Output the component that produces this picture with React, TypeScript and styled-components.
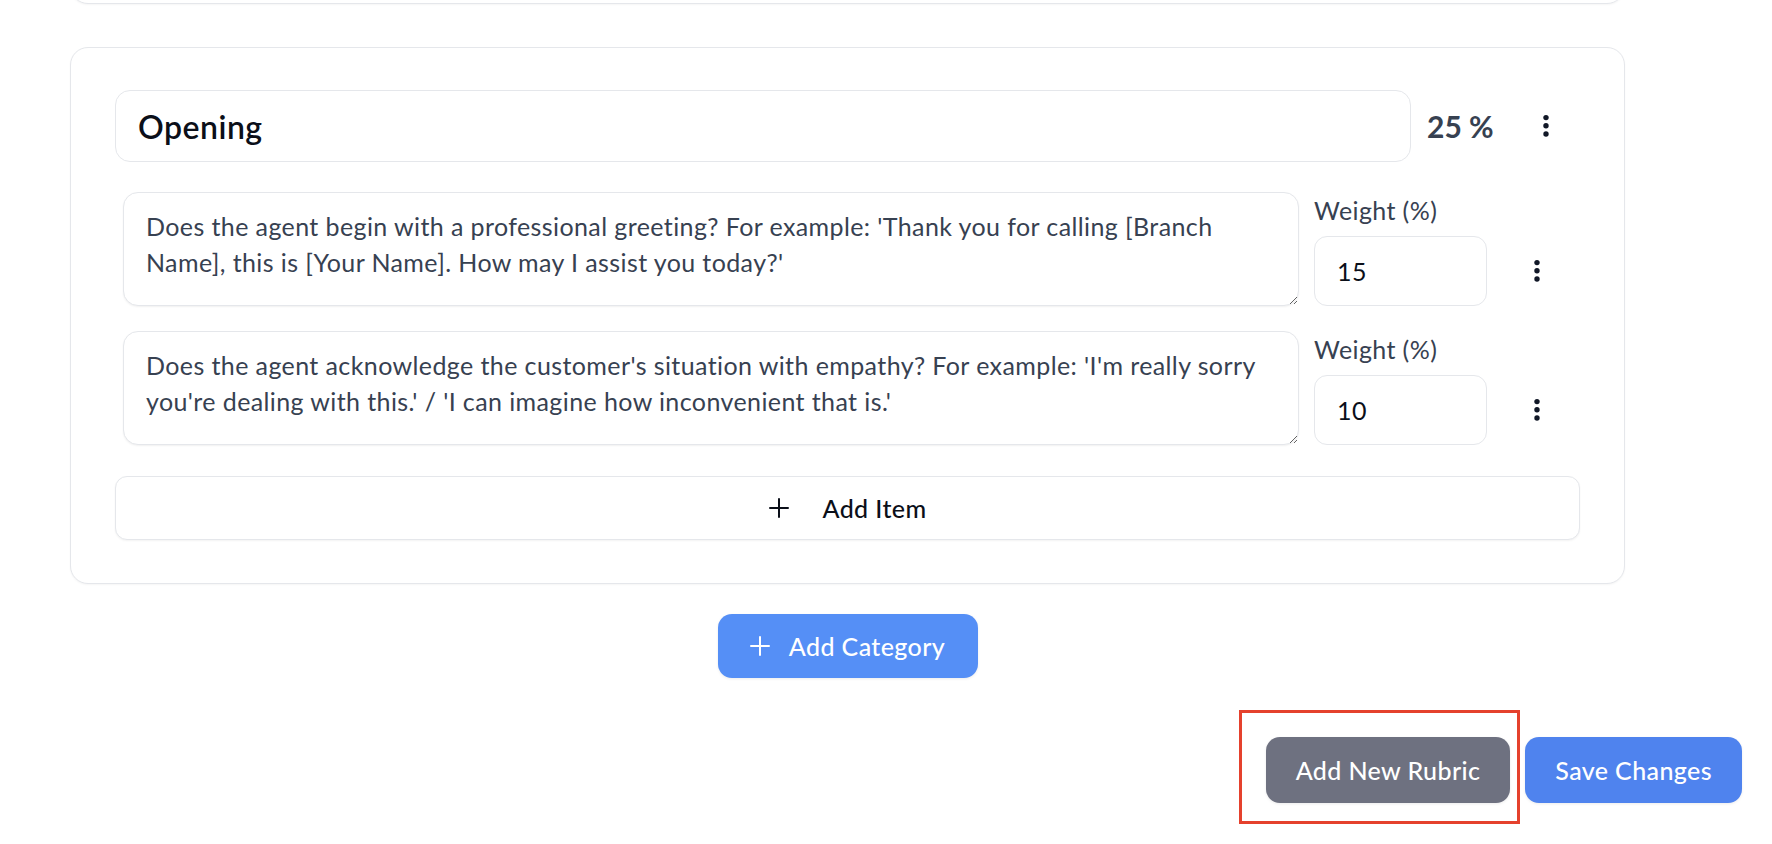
import React from 'react';
import styled, { createGlobalStyle, css } from 'styled-components';

const GlobalStyle = createGlobalStyle`
  html, body {
    margin: 0;
    padding: 0;
    background: #ffffff;
  }

  body {
    font-family: Lato, "Noto Sans", "Liberation Sans", sans-serif;
    color: #111827;
    overflow: hidden;
  }

  * {
    box-sizing: border-box;
  }
`;

// body copy is a touch wider than Lato's natural width
const bodyText = css`
  font-family: inherit;
  font-size: 25px;
  letter-spacing: 0.4px;
`;

const Page = styled.div`
  display: flex;
  flex-direction: column;
  padding: 0 30px 8px 70px;
`;

const Main = styled.div`
  display: flex;
  flex-direction: column;
  margin-right: 117px;
`;

const Card = styled.section`
  background: #ffffff;
  border: 1px solid #e5e7eb;
  border-radius: 18px;
  box-shadow: 0 1px 2px rgba(0, 0, 0, .04);
`;

const PrevCard = styled(Card)`
  height: 40px;
  margin-top: -36px;
`;

const CategoryCard = styled(Card)`
  display: flex;
  flex-direction: column;
  margin-top: 43px;
  padding: 42px 44px 43px 44px;
`;

const TitleRow = styled.div`
  align-items: center;
  display: flex;
`;

const TitleInput = styled.input`
  background: #ffffff;
  border: 1px solid #e5e7eb;
  border-radius: 15px;
  color: #0b0f19;
  font-family: inherit;
  font-size: 32px;
  font-weight: 600;
  height: 72px;
  letter-spacing: 0.5px;
  outline: none;
  padding: 0 22px;
  width: 1296px;
`;

const Percent = styled.span`
  color: #374151;
  font-size: 30px;
  font-weight: 700;
  margin-left: 16px;
  white-space: nowrap;
`;

const MenuButton = styled.button<{ gap: number }>`
  align-items: center;
  background: none;
  border: none;
  color: #111827;
  cursor: pointer;
  display: inline-flex;
  height: 40px;
  justify-content: center;
  margin-left: ${(p) => p.gap}px;
  padding: 0;
  width: 40px;
`;

const Items = styled.div`
  display: flex;
  flex-direction: column;
  gap: 25px;
  margin-top: 30px;
  padding-left: 8px;
`;

const ItemRow = styled.div`
  align-items: stretch;
  display: flex;
`;

const Question = styled.textarea`
  ${bodyText};
  background: #ffffff;
  border: 1px solid #e5e7eb;
  border-radius: 15px;
  box-shadow: 0 1px 2px rgba(0, 0, 0, .06);
  color: #374151;
  height: 114px;
  line-height: 36px;
  outline: none;
  padding: 15px 22px;
  width: 1176px;
`;

const WeightColumn = styled.div`
  display: flex;
  flex-direction: column;
  margin-left: 15px;
`;

const WeightLabel = styled.label`
  ${bodyText};
  color: #374151;
  line-height: 36px;
`;

const WeightInput = styled.input`
  ${bodyText};
  background: #ffffff;
  border: 1px solid #e5e7eb;
  border-radius: 13px;
  color: #0b0f19;
  height: 70px;
  margin-top: 8px;
  outline: none;
  padding: 0 22px;
  width: 173px;
`;

const RowMenu = styled.div`
  align-items: center;
  align-self: flex-end;
  display: flex;
  height: 70px;
`;

const AddItemButton = styled.button`
  ${bodyText};
  align-items: center;
  background: #ffffff;
  border: 1px solid #e5e7eb;
  border-radius: 12px;
  box-shadow: 0 1px 2px rgba(0, 0, 0, .05);
  color: #0b0f19;
  cursor: pointer;
  display: flex;
  font-weight: 500;
  gap: 34px;
  height: 64px;
  justify-content: center;
  margin-top: 31px;
  width: 100%;
`;

const CategoryRow = styled.div`
  display: flex;
  justify-content: center;
  margin-top: 30px;
`;

const PrimaryButton = styled.button<{ tone: 'blue' | 'light' | 'gray' }>`
  ${bodyText};
  align-items: center;
  background: ${(p) => (p.tone === 'blue' ? '#4f83ee' : p.tone === 'light' ? '#558ff6' : '#6e7180')};
  border: none;
  border-radius: 14px;
  box-shadow: 0 1px 3px rgba(0, 0, 0, .08);
  color: #ffffff;
  cursor: pointer;
  display: inline-flex;
  font-weight: 500;
  gap: 19px;
  justify-content: center;
`;

const CategoryButton = styled(PrimaryButton)`
  height: 64px;
  width: 260px;
`;

const Footer = styled.div`
  align-items: flex-start;
  display: flex;
  justify-content: flex-end;
  margin-top: 32px;
`;

const FooterButton = styled(PrimaryButton)`
  height: 66px;
  padding: 0 30px;
`;

const SaveButton = styled(FooterButton)`
  margin-top: 27px;
`;

// red annotation frame drawn around the highlighted button
const Highlight = styled.div`
  border: 3px solid #e5412d;
  display: flex;
  margin-right: 5px;
  padding: 24px 7px 18px 24px;
`;

const Dots = () => (
  <svg width="8" height="24" viewBox="0 0 8 24">
    <circle cx="4" cy="3.6" r="2.7" fill="currentColor" />
    <circle cx="4" cy="11.8" r="2.7" fill="currentColor" />
    <circle cx="4" cy="20" r="2.7" fill="currentColor" />
  </svg>
);

const PlusIcon = () => (
  <svg width="20" height="20" viewBox="0 0 20 20">
    <path d="M10 1v18M1 10h18" stroke="currentColor" strokeWidth="2" fill="none" strokeLinecap="round" />
  </svg>
);

const items = [
  {
    text: "Does the agent begin with a professional greeting? For example: 'Thank you for calling [Branch Name], this is [Your Name]. How may I assist you today?'",
    weight: '15',
  },
  {
    text: "Does the agent acknowledge the customer's situation with empathy? For example: 'I'm really sorry you're dealing with this.' / 'I can imagine how inconvenient that is.'",
    weight: '10',
  },
];

const App = () => (
  <>
    <GlobalStyle />
    <Page>
      <Main>
        <PrevCard />
        <CategoryCard>
          <TitleRow>
            <TitleInput defaultValue="Opening" />
            <Percent>25 %</Percent>
            <MenuButton gap={32}>
              <Dots />
            </MenuButton>
          </TitleRow>
          <Items>
            {items.map((item) => (
              <ItemRow key={item.weight}>
                <Question defaultValue={item.text} />
                <WeightColumn>
                  <WeightLabel>Weight (%)</WeightLabel>
                  <WeightInput defaultValue={item.weight} />
                </WeightColumn>
                <RowMenu>
                  <MenuButton gap={30}>
                    <Dots />
                  </MenuButton>
                </RowMenu>
              </ItemRow>
            ))}
          </Items>
          <AddItemButton>
            <PlusIcon />
            <span>Add Item</span>
          </AddItemButton>
        </CategoryCard>
        <CategoryRow>
          <CategoryButton tone="light">
            <PlusIcon />
            <span>Add Category</span>
          </CategoryButton>
        </CategoryRow>
      </Main>
      <Footer>
        <Highlight>
          <FooterButton tone="gray">Add New Rubric</FooterButton>
        </Highlight>
        <SaveButton tone="blue">Save Changes</SaveButton>
      </Footer>
    </Page>
  </>
);

export default App;
